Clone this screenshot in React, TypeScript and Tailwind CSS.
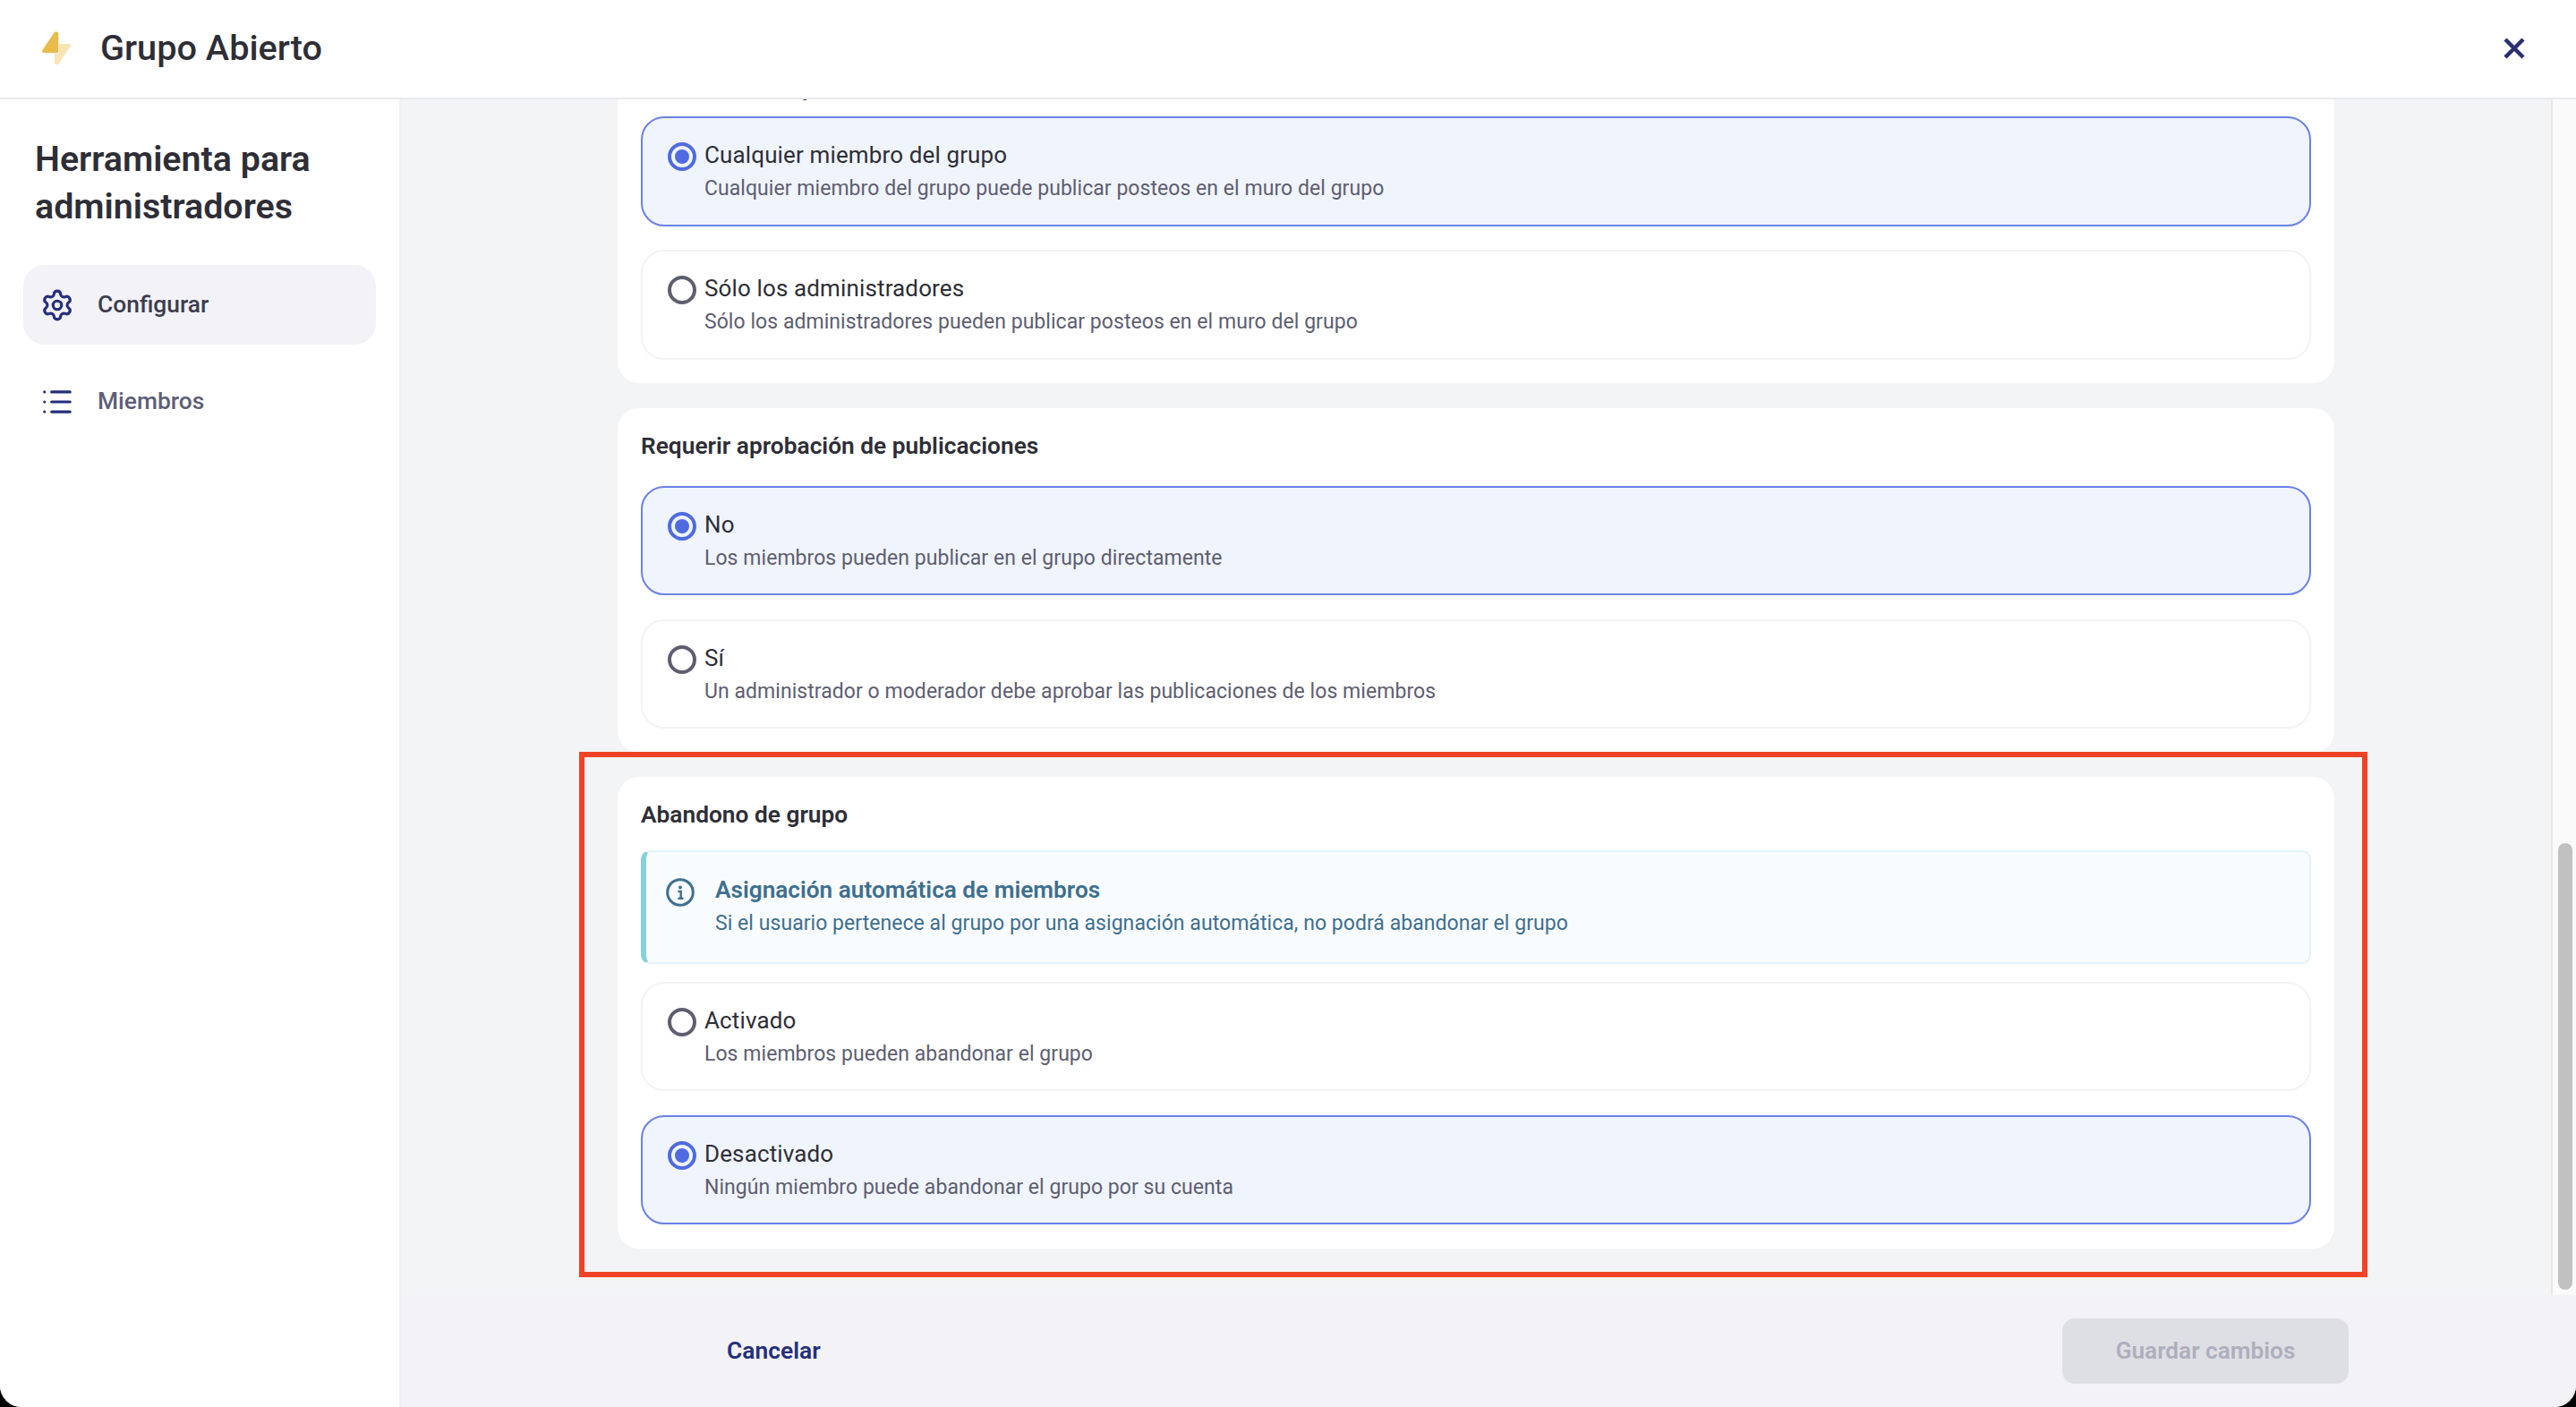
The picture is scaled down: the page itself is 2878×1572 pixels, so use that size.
import React from "react";
import { List, Settings } from "lucide-react";

type Option = { label: string; description: string; selected?: boolean };

const publishOptions: Option[] = [
  {
    label: "Cualquier miembro del grupo",
    description: "Cualquier miembro del grupo puede publicar posteos en el muro del grupo",
    selected: true,
  },
  {
    label: "Sólo los administradores",
    description: "Sólo los administradores pueden publicar posteos en el muro del grupo",
  },
];

const approvalOptions: Option[] = [
  {
    label: "No",
    description: "Los miembros pueden publicar en el grupo directamente",
    selected: true,
  },
  {
    label: "Sí",
    description: "Un administrador o moderador debe aprobar las publicaciones de los miembros",
  },
];

const leaveOptions: Option[] = [
  { label: "Activado", description: "Los miembros pueden abandonar el grupo" },
  {
    label: "Desactivado",
    description: "Ningún miembro puede abandonar el grupo por su cuenta",
    selected: true,
  },
];

const OptionRow: React.FC<{ option: Option }> = ({ option }) => (
  <div
    className={`flex h-[122.5px] items-start gap-[9px] rounded-[26px] border-2 pl-[28px] pt-[27px] ${
      option.selected ? "border-[#6a82e6] bg-[#f0f4fc]" : "border-[#f3f3f6] bg-white"
    }`}
  >
    <span
      className={`flex h-[32px] w-[32px] shrink-0 items-center justify-center rounded-full border-[4px] ${
        option.selected ? "border-[#4f6bdf]" : "border-[#5e5e70]"
      }`}
    >
      {option.selected && <span className="h-[16px] w-[16px] rounded-full bg-[#4f6bdf]" />}
    </span>
    <div className="-mt-[4px]">
      <div className="text-[26px] leading-[36px] tracking-[0.13px] text-[#2e2e36]">{option.label}</div>
      <div className="mt-[2px] text-[23px] leading-[36px] tracking-[0.05px] text-[#5e5e70]">{option.description}</div>
    </div>
  </div>
);

const Card: React.FC<{ title: string; titleGap?: string; children: React.ReactNode }> = ({
  title,
  titleGap = "mt-[27px]",
  children,
}) => (
  <section className="w-[1918px] rounded-[24px] bg-white px-[26px] pb-[26.5px] pt-[24px]">
    <h2 className="text-[26.3px] font-semibold leading-[36px] text-[#2e2e36]">{title}</h2>
    <div className={`${titleGap} flex flex-col gap-[26.5px]`}>{children}</div>
  </section>
);

export default function App() {
  return (
    <div className="flex h-[1572px] w-[2878px] flex-col overflow-hidden bg-black [font-family:Roboto,sans-serif]">
      <div className="flex min-h-0 flex-1 flex-col overflow-hidden rounded-b-[24px] bg-white">
        {/* Header */}
        <header className="relative z-10 flex h-[111px] shrink-0 items-center border-b-2 border-[#e9e9ef] bg-white pb-[2px] pl-[47px] pr-[57px]">
          <svg width="32" height="38" viewBox="0 0 32 38" fill="none">
            <path d="M13.5 1.5c1.7-2 4.8-1.3 4.8 1.5v19.5c0 .9-.7 1.5-1.5 1.5H2c-1.7 0-2.6-1.8-1.6-3.1L13.5 1.5z" fill="#e9bb4b" />
            <path d="M19 14h11.3c1.5 0 2.3 1.6 1.4 2.8L18.5 36.3c-1.3 1.8-4.5 1.2-4.5-1.3V24.8h3c1.2 0 2-.8 2-2V14z" fill="#f8e4b4" />
          </svg>
          <h1 className="ml-[33px] text-[39.7px] font-medium text-[#2e2e36]">Grupo Abierto</h1>
          <svg className="ml-auto" width="24" height="24" viewBox="0 0 24 24" fill="none">
            <path d="M2 2l20 20M22 2L2 22" stroke="#2a2f6f" strokeWidth="4.5" />
          </svg>
        </header>

        <div className="flex min-h-0 flex-1">
          {/* Sidebar */}
          <aside className="w-[448px] shrink-0 border-r-2 border-[#f0f0f3] bg-white pl-[26px] pr-[26px]">
            <h2 className="ml-[13px] mt-[40px] text-[39.4px] font-semibold leading-[53px] text-[#2e2e36]">
              Herramienta para administradores
            </h2>
            <nav className="mt-[39px] flex flex-col gap-[19px]">
              <a className="flex h-[89px] items-center gap-[26px] rounded-[24px] bg-[#f2f2f7] pl-[19px] text-[26.4px] font-medium text-[#3d3d4e]">
                <Settings className="h-[38px] w-[38px] text-[#252f7a]" strokeWidth={2} />
                Configurar
              </a>
              <a className="flex h-[89px] items-center gap-[26px] rounded-[24px] pl-[19px] text-[26.4px] font-medium text-[#5e5e78]">
                <List className="h-[38px] w-[38px] text-[#252f7a]" strokeWidth={2} />
                Miembros
              </a>
            </nav>
          </aside>

          <div className="flex min-w-0 flex-1 flex-col">
            <div className="flex min-h-0 flex-1">
              {/* Scroll pane */}
              <main className="min-w-0 flex-1 overflow-hidden bg-[#f3f4f6]">
                <div className="-mt-[55px] flex flex-col items-center gap-[27.5px]">
                  <Card title="Publicación de posteos" titleGap="mt-[14px]">
                    {publishOptions.map((o) => (
                      <OptionRow key={o.label} option={o} />
                    ))}
                  </Card>
                  <Card title="Requerir aprobación de publicaciones">
                    {approvalOptions.map((o) => (
                      <OptionRow key={o.label} option={o} />
                    ))}
                  </Card>
                  <div className="relative">
                    <Card title="Abandono de grupo">
                      <div className="-mb-[7px] -mt-[5px] flex h-[127px] items-start rounded-[10px] border-[2.5px] border-l-[6px] border-[#e3f3f9] border-l-[#86d0e0] bg-[#f9fcfe] pl-[22px] pt-[29px]">
                        <svg className="shrink-0" width="32" height="32" viewBox="0 0 32 32" fill="none">
                          <circle cx="16" cy="16" r="14.3" stroke="#3e6f8e" strokeWidth="3" />
                          <circle cx="16" cy="10.5" r="1.9" fill="#3e6f8e" />
                          <path d="M13.5 15h3.2v7.5M13.5 22.7h6" stroke="#3e6f8e" strokeWidth="2.4" />
                        </svg>
                        <div className="-mt-[5px] ml-[23px] text-[#3e6f8e]">
                          <div className="text-[26.2px] font-semibold leading-[36px]">Asignación automática de miembros</div>
                          <div className="mt-[2px] text-[23px] leading-[36px] tracking-[0.05px]">
                            Si el usuario pertenece al grupo por una asignación automática, no podrá abandonar el grupo
                          </div>
                        </div>
                      </div>
                      {leaveOptions.map((o) => (
                        <OptionRow key={o.label} option={o} />
                      ))}
                    </Card>
                    {/* red annotation frame */}
                    <div className="pointer-events-none absolute -bottom-[32px] -left-[43px] -right-[37px] -top-[28px] border-[6px] border-[#f04325]" />
                  </div>
                </div>
              </main>
              {/* Scrollbar */}
              <div className="w-[28px] shrink-0 border-l-2 border-[#e8e8e8] bg-[#fafafa] pl-[6px]">
                <div className="mt-[831px] h-[499px] w-[16px] rounded-full bg-[#c1c1c1]" />
              </div>
            </div>

            {/* Footer */}
            <footer className="flex h-[125px] shrink-0 items-center bg-[#f2f2f7] pl-[364px] pr-[254px]">
              <button className="text-[26.4px] font-semibold text-[#252f7a]">Cancelar</button>
              <button
                disabled
                className="ml-auto h-[73px] w-[320px] rounded-[14px] bg-[#dedfe4] text-[26.2px] font-semibold text-[#aeaebd]"
              >
                Guardar cambios
              </button>
            </footer>
          </div>
        </div>
      </div>
    </div>
  );
}
